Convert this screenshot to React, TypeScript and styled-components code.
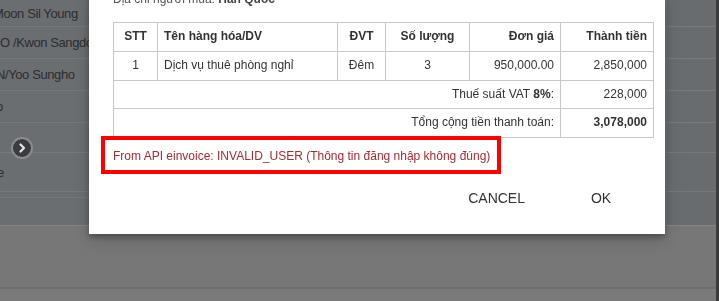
import styled, { createGlobalStyle } from "styled-components";

const GlobalStyle = createGlobalStyle`
  html, body {
    margin: 0;
    padding: 0;
    overflow: hidden;
    font-family: "Liberation Sans", Arial, sans-serif;
  }
`;

const guests = [
  { name: "Moon Sil Young", indent: -7, height: 27 },
  { name: "O /Kwon Sangdo", indent: 0, height: 32 },
  { name: "N/Yoo Sungho", indent: -4, height: 32 },
  { name: "o", indent: -4, height: 32 },
  { name: "", indent: 0, height: 30 },
  { name: "e", indent: -3, height: 39 },
];

type Item = {
  stt: number;
  name: string;
  unit: string;
  qty: number;
  price: string;
  amount: string;
};

const items: Item[] = [
  {
    stt: 1,
    name: "Dịch vụ thuê phòng nghỉ",
    unit: "Đêm",
    qty: 3,
    price: "950,000.00",
    amount: "2,850,000",
  },
];

const App = () => {
  return (
    <>
      <GlobalStyle />
      <Page>
        <Main>
          <TopArea>
            <ArrowButton>
              <svg width="10" height="10" viewBox="0 0 10 10">
                <polyline
                  points="3.5,1.5 7,5 3.5,8.5"
                  fill="none"
                  stroke="#e6e6e6"
                  strokeWidth="2.2"
                  strokeLinecap="round"
                  strokeLinejoin="round"
                />
              </svg>
            </ArrowButton>
            {guests.map((g, i) => (
              <GuestRow key={i} $height={g.height}>
                <GuestName style={{ textIndent: g.indent }}>{g.name}</GuestName>
                <SideCell />
              </GuestRow>
            ))}
            <ListFooter>
              <FooterInner />
              <SideCell />
            </ListFooter>
          </TopArea>
          <BottomArea>
            <BottomBar />
          </BottomArea>
        </Main>
        <Scrollbar />
      </Page>

      <Backdrop>
        <Dialog>
          <Body>
            <Address>
              Địa chỉ người mua: <strong>Hàn Quốc</strong>
            </Address>
            <InvoiceTable>
              <thead>
                <tr>
                  <Th $w={44} $align="center">STT</Th>
                  <Th $w={180} $align="left">Tên hàng hóa/DV</Th>
                  <Th $w={48} $align="center">ĐVT</Th>
                  <Th $w={84} $align="center">Số lượng</Th>
                  <Th $w={91} $align="right">Đơn giá</Th>
                  <Th $w={93} $align="right">Thành tiền</Th>
                </tr>
              </thead>
              <tbody>
                {items.map((it) => (
                  <tr key={it.stt}>
                    <Td $align="center">{it.stt}</Td>
                    <Td $align="left">{it.name}</Td>
                    <Td $align="center">{it.unit}</Td>
                    <Td $align="center">{it.qty}</Td>
                    <Td $align="right">{it.price}</Td>
                    <Td $align="right">{it.amount}</Td>
                  </tr>
                ))}
                <tr>
                  <Td colSpan={5} $align="right">
                    Thuế suất VAT <strong>8%</strong>:
                  </Td>
                  <Td $align="right">228,000</Td>
                </tr>
                <tr>
                  <Td colSpan={5} $align="right">
                    Tổng cộng tiền thanh toán:
                  </Td>
                  <Td $align="right">
                    <strong>3,078,000</strong>
                  </Td>
                </tr>
              </tbody>
            </InvoiceTable>
          </Body>
          <ErrorBox>
            From API einvoice: INVALID_USER (Thông tin đăng nhập không đúng)
          </ErrorBox>
          <Actions>
            <ActionButton>Cancel</ActionButton>
            <ActionButton>OK</ActionButton>
          </Actions>
        </Dialog>
      </Backdrop>
    </>
  );
};

const Page = styled.div`
  display: grid;
  grid-template-columns: 1fr 3px;
  height: 301px;
  width: 719px;
`;

const Main = styled.div`
  display: flex;
  flex-direction: column;
`;

const TopArea = styled.div`
  position: relative;
  height: 226px;
  background: #6b6e71;
  overflow: hidden;
`;

const GuestRow = styled.div<{ $height: number }>`
  display: grid;
  grid-template-columns: 665px 1fr;
  height: ${(p) => p.$height}px;
  border-bottom: 1px solid #76797c;
  box-sizing: border-box;
`;

const GuestName = styled.div`
  display: flex;
  align-items: center;
  font-size: 13px;
  letter-spacing: -0.4px;
  color: #2b2d2f;
  white-space: nowrap;
  overflow: hidden;
`;

const SideCell = styled.div`
  background: #686c6f;
  border-left: 2px solid #74777a;
`;

const ListFooter = styled.div`
  display: grid;
  grid-template-columns: 665px 1fr;
  height: 34px;
  border-bottom: 1px solid #838588;
  box-sizing: border-box;
`;

const FooterInner = styled.div`
  margin-top: 5px;
  border-top: 1px solid #75787b;
`;

const ArrowButton = styled.div`
  position: absolute;
  left: 11px;
  top: 137px;
  width: 22px;
  height: 22px;
  box-sizing: border-box;
  border-radius: 50%;
  background: #3a3c3f;
  border: 2px solid #8a8c8f;
  display: flex;
  align-items: center;
  justify-content: center;
  z-index: 1;
`;

const BottomArea = styled.div`
  flex: 1;
  background: #777777;
  display: flex;
  flex-direction: column;
  justify-content: flex-end;
`;

const BottomBar = styled.div`
  height: 12px;
  background: #7a7a7a;
  border-top: 2px solid #6e6e6e;
`;

const Scrollbar = styled.div`
  background: #3b3b3b;
`;

const Backdrop = styled.div`
  position: fixed;
  inset: 0;
  display: flex;
  align-items: flex-start;
  padding-left: 89px;
`;

const Dialog = styled.div`
  width: 576px;
  margin-top: -8px;
  background: #ffffff;
  box-shadow: 0 3px 6px rgba(0, 0, 0, 0.3), 0 6px 16px rgba(0, 0, 0, 0.15);
  padding-bottom: 18px;
`;

const Body = styled.div`
  padding: 0 12px 0 24px;
`;

const Address = styled.div`
  font-size: 12px;
  line-height: 14px;
  color: #555555;

  strong {
    color: #444444;
  }
`;

const InvoiceTable = styled.table`
  margin-top: 16px;
  width: 540px;
  border-collapse: collapse;
  table-layout: fixed;
  font-size: 12px;
  color: #333333;
`;

const Th = styled.th<{ $w: number; $align: string }>`
  width: ${(p) => p.$w}px;
  text-align: ${(p) => p.$align};
  font-weight: bold;
  padding: 7px 6px;
  line-height: 13.75px;
  border: 1px solid #c8c8c8;
  box-sizing: border-box;
`;

const Td = styled.td<{ $align: string }>`
  text-align: ${(p) => p.$align};
  padding: 7px 6px;
  line-height: 13.75px;
  border: 1px solid #c8c8c8;
  white-space: nowrap;
`;

const ErrorBox = styled.div`
  position: relative;
  margin: -2px 0 0 12px;
  width: 400px;
  height: 38px;
  box-sizing: border-box;
  border: 4px solid #ff0000;
  padding: 1px 0 0 8px;
  display: flex;
  align-items: center;
  font-size: 12px;
  color: #ab2a30;
  white-space: nowrap;
`;

const Actions = styled.div`
  display: flex;
  justify-content: flex-end;
  gap: 28px;
  margin-top: 6px;
  padding-right: 32px;
`;

const ActionButton = styled.button`
  height: 36px;
  min-width: 64px;
  padding: 0 16px;
  border: 0;
  background: transparent;
  font-family: "Liberation Sans", Arial, sans-serif;
  font-size: 14px;
  text-transform: uppercase;
  color: #333333;
  cursor: pointer;
`;

export default App;
